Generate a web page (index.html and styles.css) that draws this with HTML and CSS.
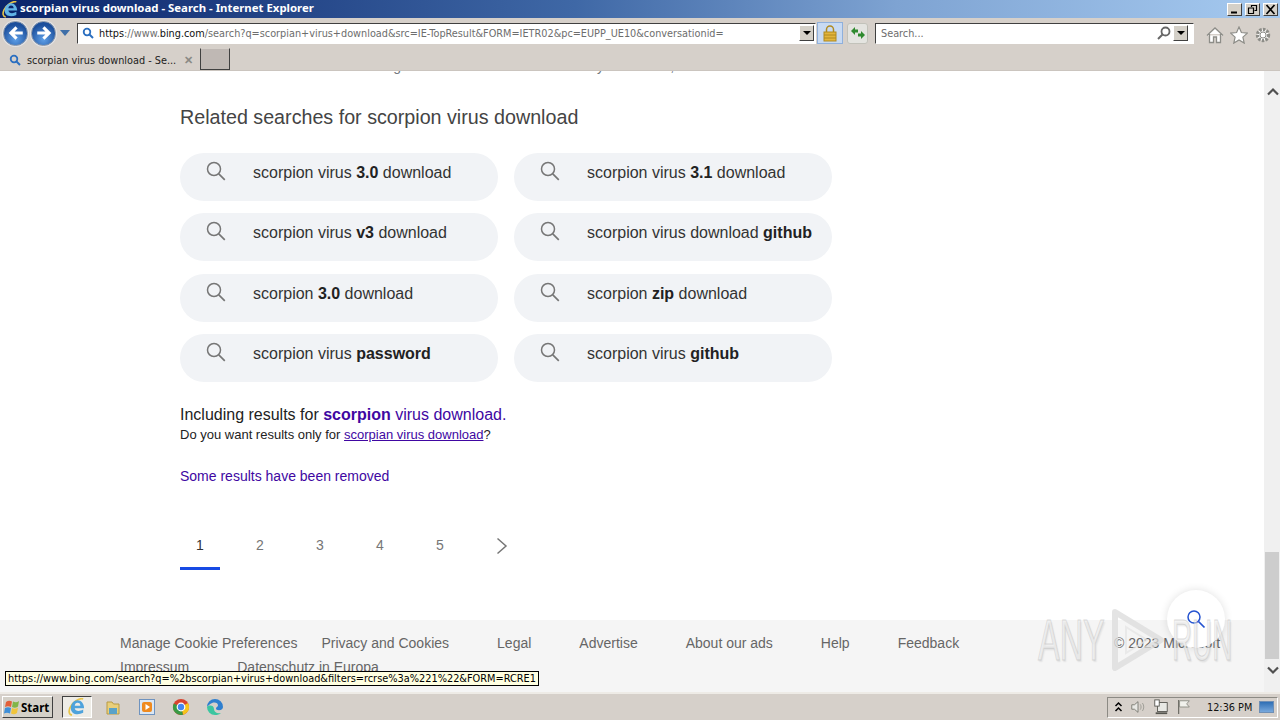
FILE: index.html
```html
<!DOCTYPE html>
<html lang="en">
<head>
<meta charset="utf-8">
<title>scorpian virus download - Search - Internet Explorer</title>
<link rel="stylesheet" href="styles.css">
</head>
<body>
<div class="window">
  <header class="titlebar">
    <svg class="ie-logo" viewBox="1 1 16 16"><path d="M14.500 1.800C11 .8 5 4.500 2.800 9.500c-1.500 3.500-.8 6.500 1.800 6.500" fill="none" stroke="#e8c548" stroke-width="1.500"/><path d="M3.500 10c0-4 2.800-7 6-7s5.800 3 5.800 7H7c.3 2.500 3.800 3.500 7.500 1.200v3C9 16.800 3.500 15 3.500 10zM7 7.800h5c-.2-2-1-2.600-2.500-2.600S7.300 6 7 7.800z" fill="#62b4e6"/></svg>
    <span class="title-text">scorpian virus download - Search - Internet Explorer</span>
    <div class="win-buttons">
      <span class="win-btn"><svg viewBox="0 0 13 11"><path d="M3 8.500h6" stroke="#000" stroke-width="2"/></svg></span>
      <span class="win-btn"><svg viewBox="0 0 13 11"><path d="M5.500 3V1.500h5v5H8.500M2.500 4h5v5.500h-5z" fill="none" stroke="#000" stroke-width="1.200"/></svg></span>
      <span class="win-btn"><svg viewBox="0 0 13 11"><path d="m2.500 1 8 9m0-9-8 9" stroke="#000" stroke-width="1.700"/></svg></span>
    </div>
  </header>
  <nav class="navbar">
    <div class="nav-arrows">
      <span class="round-btn"><svg viewBox="0 0 16 16"><path d="M14 8H4M8.500 3 3.500 8l5 5" fill="none" stroke="#fff" stroke-width="2.800"/></svg></span>
      <span class="round-btn"><svg viewBox="0 0 16 16"><path d="M2 8h10M7.500 3l5 5-5 5" fill="none" stroke="#fff" stroke-width="2.800"/></svg></span>
      <i class="blue-caret"></i>
    </div>
    <div class="address">
      <svg class="addr-icon" viewBox="0 0 12 12"><circle cx="5" cy="5" r="3.300" fill="none" stroke="#2b6fc0" stroke-width="1.800"/><path d="M7.500 7.500 11 11" stroke="#2b6fc0" stroke-width="2"/></svg>
      <span class="addr-text"><span class="addr-dark">https</span>://www.<span class="addr-dark">bing.com</span>/search?q=scorpian+virus+download&amp;src=IE-TopResult&amp;FORM=IETR02&amp;pc=EUPP_UE10&amp;conversationid=</span>
      <span class="drop-btn"><i></i></span>
    </div>
    <span class="lock-btn"><svg viewBox="0 0 14 17"><path d="M3.500 7V4.500a3.500 3.500 0 0 1 7 0V7" fill="none" stroke="#b08a20" stroke-width="1.500"/><rect x="1" y="7" width="12" height="9" fill="#e3b53c" stroke="#b08a20"/><path d="M1 10h12M1 13h12" stroke="#b08a20"/></svg></span>
    <span class="refresh-btn"><svg viewBox="0 0 16 14"><path d="M1 5 5 1v2.500h3v3H5V9zM15 9l-4 4v-2.500H8v-3h3V5z" fill="#2f8a2f"/></svg></span>
    <div class="searchbox">
      <span class="search-ph">Search...</span>
      <svg class="search-glass" viewBox="0 0 14 14"><circle cx="8.500" cy="5.500" r="4" fill="none" stroke="#666" stroke-width="1.800"/><path d="M5.500 8.500 1 13" stroke="#666" stroke-width="2"/></svg>
      <span class="drop-btn"><i></i></span>
    </div>
    <div class="tools">
      <svg viewBox="0 0 18 18"><path d="M1 9.500 9 2l8 7.500M3.500 8v8.500h4V11h3v5.500h4V8" fill="#fff" stroke="#8d8d88" stroke-width="1.300"/></svg>
      <svg viewBox="0 0 18 18"><path d="m9 1 2.400 5.500 6 .6-4.500 4 1.300 6L9 14l-5.200 3.100 1.300-6-4.500-4 6-.6z" fill="#fff" stroke="#8d8d88" stroke-width="1.200"/></svg>
      <svg viewBox="0 0 18 18"><circle cx="9" cy="9" r="5.500" fill="#fff" stroke="#8d8d88" stroke-width="3.400" stroke-dasharray="2.400 1.200"/><circle cx="9" cy="9" r="3" fill="#fff" stroke="#8d8d88" stroke-width="1"/></svg>
    </div>
  </nav>
  <div class="tabbar">
    <div class="tab">
      <svg class="tab-icon" viewBox="0 0 12 12"><circle cx="5" cy="5" r="3.300" fill="none" stroke="#2b6fc0" stroke-width="1.800"/><path d="M7.500 7.500 11 11" stroke="#2b6fc0" stroke-width="2"/></svg>
      <span class="tab-text">scorpian virus download - Se...</span>
      <span class="tab-close">✕</span>
    </div>
    <span class="new-tab"></span>
  </div>
  <div class="viewport">
    <main class="page">
      <div class="results">
        <p class="clipped">Details are now all listed here along with other files in that archive by the author,</p>
        <h2 class="related-title">Related searches for scorpion virus download</h2>
        <div class="related-grid">
          <a class="pill"><svg class="pill-icon" viewBox="0 0 20 20"><circle cx="8" cy="8" r="6.500" fill="none" stroke="#767676" stroke-width="1.500"/><path d="m12.800 12.800 6 6" stroke="#767676" stroke-width="1.700"/></svg><span>scorpion virus <b>3.0</b> download</span></a>
          <a class="pill"><svg class="pill-icon" viewBox="0 0 20 20"><circle cx="8" cy="8" r="6.500" fill="none" stroke="#767676" stroke-width="1.500"/><path d="m12.800 12.800 6 6" stroke="#767676" stroke-width="1.700"/></svg><span>scorpion virus <b>3.1</b> download</span></a>
          <a class="pill"><svg class="pill-icon" viewBox="0 0 20 20"><circle cx="8" cy="8" r="6.500" fill="none" stroke="#767676" stroke-width="1.500"/><path d="m12.800 12.800 6 6" stroke="#767676" stroke-width="1.700"/></svg><span>scorpion virus <b>v3</b> download</span></a>
          <a class="pill"><svg class="pill-icon" viewBox="0 0 20 20"><circle cx="8" cy="8" r="6.500" fill="none" stroke="#767676" stroke-width="1.500"/><path d="m12.800 12.800 6 6" stroke="#767676" stroke-width="1.700"/></svg><span>scorpion virus download <b>github</b></span></a>
          <a class="pill"><svg class="pill-icon" viewBox="0 0 20 20"><circle cx="8" cy="8" r="6.500" fill="none" stroke="#767676" stroke-width="1.500"/><path d="m12.800 12.800 6 6" stroke="#767676" stroke-width="1.700"/></svg><span>scorpion <b>3.0</b> download</span></a>
          <a class="pill"><svg class="pill-icon" viewBox="0 0 20 20"><circle cx="8" cy="8" r="6.500" fill="none" stroke="#767676" stroke-width="1.500"/><path d="m12.800 12.800 6 6" stroke="#767676" stroke-width="1.700"/></svg><span>scorpion <b>zip</b> download</span></a>
          <a class="pill"><svg class="pill-icon" viewBox="0 0 20 20"><circle cx="8" cy="8" r="6.500" fill="none" stroke="#767676" stroke-width="1.500"/><path d="m12.800 12.800 6 6" stroke="#767676" stroke-width="1.700"/></svg><span>scorpion virus <b>password</b></span></a>
          <a class="pill"><svg class="pill-icon" viewBox="0 0 20 20"><circle cx="8" cy="8" r="6.500" fill="none" stroke="#767676" stroke-width="1.500"/><path d="m12.800 12.800 6 6" stroke="#767676" stroke-width="1.700"/></svg><span>scorpion virus <b>github</b></span></a>
        </div>
        <p class="including">Including results for <a class="visited"><b>scorpion</b> virus download.</a></p>
        <p class="only-for">Do you want results only for <a class="visited underlined">scorpian virus download</a>?</p>
        <p class="removed"><a class="visited">Some results have been removed</a></p>
        <div class="pager">
          <span class="page-num current">1</span>
          <span class="page-num">2</span>
          <span class="page-num">3</span>
          <span class="page-num">4</span>
          <span class="page-num">5</span>
          <span class="page-num"><svg class="pager-next" viewBox="0 0 12 18"><path d="m1.500 1.500 8.500 7.500-8.500 7.500" fill="none" stroke="#767676" stroke-width="1.500"/></svg></span>
        </div>
      </div>
      <footer class="page-footer">
        <div class="foot-links">
          <a>Manage Cookie Preferences</a>
          <a>Privacy and Cookies</a>
          <a>Legal</a>
          <a>Advertise</a>
          <a>About our ads</a>
          <a>Help</a>
          <a>Feedback</a>
          <a>Impressum</a>
          <a>Datenschutz in Europa</a>
        </div>
        <span class="copyright">© 2023 Microsoft</span>
      </footer>
    </main>
    <aside class="scrollbar">
      <svg class="scroll-arrow" viewBox="0 0 14 10"><path d="m2 7.500 5-5 5 5" fill="none" stroke="#505050" stroke-width="2.200"/></svg>
      <div class="scroll-track"><div class="scroll-thumb"></div></div>
      <svg class="scroll-arrow" viewBox="0 0 14 10"><path d="m2 2.500 5 5 5-5" fill="none" stroke="#505050" stroke-width="2.200"/></svg>
    </aside>
    <span class="fab"><svg viewBox="0 0 20 20"><circle cx="8" cy="8" r="6" fill="none" stroke="#2553d0" stroke-width="1.500"/><path d="m12.500 12.500 6 6" stroke="#2553d0" stroke-width="1.700"/></svg></span>
    <div class="watermark"><span class="wm-any">ANY</span><svg viewBox="0 0 56 66"><path d="M5 5 51 33 5 61z" fill="none" stroke="#dcdcdc" stroke-width="6" stroke-linejoin="round"/><path d="M16 20 37 33 16 46z" fill="none" stroke="#e6e6e6" stroke-width="2"/></svg><span class="wm-run">RUN</span></div>
    <div class="status-tip">https://www.bing.com/search?q=%2bscorpian+virus+download&amp;filters=rcrse%3a%221%22&amp;FORM=RCRE1</div>
  </div>
  <footer class="taskbar">
    <button class="start"><svg viewBox="0 0 16 16"><path d="M2 3c2-1.500 4-1.500 6-.5L7 8C5 7 3 7 1 8z" fill="#e2603a"/><path d="M9 2.500c2 1 4 1 6-.5l-1 5.500c-2 1.500-4 1.500-6 .5z" fill="#82b548"/><path d="M1 9c2-1 4-1 6 0l-1 5.500c-2-1-4-1-6 0z" fill="#3f8fd8"/><path d="M8 9c2 1 4 1 6-.5L13 14c-2 1.500-4 1.500-6 .5z" fill="#f0c43c"/></svg>Start</button>
    <div class="quick">
      <span class="quick-item active"><svg viewBox="1 1 16 16"><path d="M14.500 1.800C11 .8 5 4.500 2.800 9.500c-1.500 3.500-.8 6.500 1.800 6.500" fill="none" stroke="#e8c548" stroke-width="1.500"/><path d="M3.500 10c0-4 2.800-7 6-7s5.800 3 5.800 7H7c.3 2.500 3.800 3.500 7.500 1.200v3C9 16.800 3.500 15 3.500 10zM7 7.800h5c-.2-2-1-2.600-2.500-2.600S7.300 6 7 7.800z" fill="#4fa3dc"/></svg></span>
      <span class="quick-item"><svg viewBox="0 0 18 18"><path d="M3 4h5l1.500 2H15v10H3z" fill="#e9cf7a" stroke="#b89b45"/><path d="M5 10h8v6H5z" fill="#5aa2c8"/></svg></span>
      <span class="quick-item"><svg viewBox="0 0 18 18"><rect x="1.500" y="1.500" width="15" height="15" fill="#dbe7f4" stroke="#6f93bf"/><rect x="4" y="4" width="10" height="10" rx="2" fill="#ef8a1f"/><path d="M7.500 6 12 9l-4.500 3z" fill="#fff"/></svg></span>
      <span class="quick-item"><svg viewBox="0 0 18 18"><circle cx="9" cy="9" r="8" fill="#d8432f"/><path d="M9 9 16 5a8 8 0 0 1-5 11.800z" fill="#f6c51b"/><path d="M9 9 11 16.800A8 8 0 0 1 1.800 5.500z" fill="#3a9a45"/><circle cx="9" cy="9" r="3.800" fill="#4486f0" stroke="#fff" stroke-width="1.200"/></svg></span>
      <span class="quick-item"><svg viewBox="0 0 18 18"><path d="M1 9a8 8 0 0 1 16 0c0 2-1.500 3.200-4 3.200-2 0-3-.7-3-1.700 0-1.800 2-1.500 2-3C12 5.500 10.500 4.500 8.500 4.500 5 4.500 3 7 1 9z" fill="#2f7fcf"/><path d="M1 9c2-2.500 7-2 7 2 0 3 3 5 7 4-1.500 1.500-3.500 2-6 2a8 8 0 0 1-8-8z" fill="#3cc6a0"/></svg></span>
    </div>
    <div class="tray">
      <svg class="tray-caret" viewBox="0 0 9 12"><path d="m1.500 5 3-3 3 3M1.500 10l3-3 3 3" fill="none" stroke="#000" stroke-width="1.500"/></svg>
      <svg viewBox="0 0 18 18"><path d="M2 6.500h3L9 3v12L5 11.500H2z" fill="#e8e8e4" stroke="#77776f"/><path d="M11.500 6c1.300 2 1.300 4 0 6M14 4.500c2 3 2 6 0 9" fill="none" stroke="#9a9a92"/></svg>
      <svg viewBox="0 0 18 18"><rect x="5" y="4" width="11" height="10" fill="#e8e8e4" stroke="#55554f"/><rect x="2" y="1" width="5" height="7" fill="#fff" stroke="#55554f"/><path d="M3 16h13" stroke="#55554f" stroke-width="2"/></svg>
      <svg viewBox="0 0 18 18"><path d="M3 1v16" stroke="#66665f" stroke-width="1.300"/><path d="M4 2h11l-3 3.500L15 9H4z" fill="#f1f1ec" stroke="#8a8a82"/></svg>
      <span class="clock">12:36 PM</span>
      <span class="show-desktop"></span>
    </div>
  </footer>
</div>
</body>
</html>
```
FILE: styles.css
```css
* { box-sizing: border-box; }
html, body { margin: 0; padding: 0; }
body { width: 1280px; height: 720px; overflow: hidden; font-family: "Liberation Sans", Arial, sans-serif; background: #fff; }
p, h2 { margin: 0; }
svg { display: block; }

.window { display: flex; flex-direction: column; width: 1280px; height: 720px; }

.titlebar { flex: 0 0 18px; display: flex; align-items: center; padding-left: 2px; background: linear-gradient(90deg, #0a246a 0%, #3f68a6 45%, #7ea3d2 70%, #a6caf0 100%); overflow: hidden; }
.ie-logo { width: 17px; height: 17px; flex: none; }
.title-text { margin-left: 1px; padding-bottom: 2px; color: #fff; font: bold 11.400px/14px "Noto Sans", sans-serif; white-space: nowrap; }
.win-buttons { margin-left: auto; display: flex; gap: 3px; padding: 1px 2px 0 0; }
.win-btn { width: 15px; height: 13px; background: #d4d0c8; border: 1px solid; border-color: #fff #404040 #404040 #fff; display: flex; align-items: center; justify-content: center; }
.win-btn svg { width: 13px; height: 11px; }

.navbar { flex: 0 0 30px; display: flex; align-items: center; background: #d6d0ca; }
.nav-arrows { display: flex; align-items: center; gap: 3px; padding-left: 3px; width: 77px; }
.round-btn { width: 25px; height: 25px; border-radius: 50%; background: radial-gradient(circle at 50% 75%, #5fa0e8, #1c4f9c 70%); border: 1px solid #8496ae; box-shadow: 0 0 0 1px #e3e3e6; display: flex; align-items: center; justify-content: center; }
.round-btn svg { width: 18px; height: 18px; }
.blue-caret { margin-left: 1px; border: 5px solid transparent; border-top: 6px solid #3f6fa8; border-bottom: 0; }
.address { width: 739px; height: 21px; display: flex; align-items: center; background: #fff; border: 1px solid; border-color: #404040 #fff #fff #404040; }
.addr-icon { width: 12px; height: 12px; margin-left: 4px; flex: none; }
.addr-text { margin-left: 5px; font: 10.800px "DejaVu Sans Condensed", "DejaVu Sans", sans-serif; color: #6d6d6d; white-space: nowrap; flex: 1; overflow: hidden; }
.addr-dark { color: #111; }
.drop-btn { width: 15px; height: 16px; background: #d4d0c8; border: 1px solid; border-color: #fff #404040 #404040 #fff; display: flex; align-items: center; justify-content: center; flex: none; margin-right: 1px; }
.drop-btn i { border: 4px solid transparent; border-top: 4px solid #000; border-bottom: 0; }
.lock-btn { margin-left: 1px; width: 26px; height: 22px; background: #c8daf2; border: 1px solid #8fb0dc; display: flex; align-items: center; justify-content: center; }
.lock-btn svg { width: 14px; height: 17px; }
.refresh-btn { margin-left: 4px; width: 21px; height: 21px; background: #e4e4e0; border: 1px solid #c2c2ba; border-radius: 3px; display: flex; align-items: center; justify-content: center; }
.refresh-btn svg { width: 16px; height: 14px; }
.searchbox { margin-left: 7px; width: 319px; height: 21px; display: flex; align-items: center; background: #fff; border: 1px solid; border-color: #404040 #fff #fff #404040; padding-right: 4px; }
.search-ph { margin-left: 5px; flex: 1; font: 10.800px "DejaVu Sans Condensed", "DejaVu Sans", sans-serif; color: #6d6d6d; }
.search-glass { width: 14px; height: 14px; margin-right: 2px; }
.tools { margin: 4px 0 0 12px; display: flex; gap: 6px; }
.tools svg { width: 18px; height: 18px; }

.tabbar { flex: 0 0 23px; display: flex; align-items: flex-start; background: #d6d0ca; border-bottom: 1px solid #cbc5bf; }
.tab { width: 200px; height: 22px; padding: 2px 0 0 9px; display: flex; align-items: center; }
.tab-icon { width: 12px; height: 12px; flex: none; }
.tab-text { margin-left: 6px; font: 10.800px "DejaVu Sans Condensed", "DejaVu Sans", sans-serif; color: #222; white-space: nowrap; flex: 1; }
.tab-close { color: #8a8a85; font-size: 11px; font-weight: bold; margin-right: 7px; }
.new-tab { width: 30px; height: 22px; background: #bfb8b4; border: 1px solid; border-color: #d6d0ca #404040 #404040 #404040; }

.viewport { flex: 1; position: relative; display: flex; overflow: hidden; min-height: 0; background: #fff; }
.page { flex: 1; display: flex; flex-direction: column; min-width: 0; overflow: hidden; }
.results { flex: 1; padding-left: 180px; }
.clipped { height: 14px; margin-top: -14px; font-size: 14px; line-height: 18px; color: #71777d; white-space: nowrap; }
.related-title { margin-top: 31px; font-size: 19.700px; font-weight: normal; line-height: 30px; color: #444; }
.related-grid { margin-top: 21px; width: 652px; display: grid; grid-template-columns: 318px 318px; column-gap: 16px; row-gap: 12.250px; }
.pill { height: 48px; border-radius: 24px; background: #f1f3f6; display: flex; align-items: flex-start; color: #333; font-size: 16px; line-height: 39px; }
.pill-icon { width: 20px; height: 20px; margin: 8px 0 0 26px; flex: none; }
.pill span { margin-left: 27px; white-space: nowrap; }
.pill b { color: #222; }
.including { margin-top: 23px; font-size: 16px; line-height: 20px; color: #222; }
.only-for { margin-top: 1px; font-size: 13px; line-height: 18px; color: #222; }
.visited { color: #4007a2; }
.underlined { text-decoration: underline; }
.removed { margin-top: 22px; font-size: 14px; line-height: 20px; }
.pager { margin-top: 37px; display: flex; }
.page-num { width: 40px; margin-right: 20px; height: 47px; text-align: center; font-size: 14px; line-height: 44px; color: #767676; display: flex; justify-content: center; }
.page-num.current { color: #333; border-bottom: 3px solid #174ae4; }
.pager-next { width: 12px; height: 18px; margin-top: 14px; margin-left: 4px; }

.page-footer { flex: 0 0 72px; background: #f5f5f5; position: relative; padding: 11px 0 0 120px; overflow: hidden; }
.foot-links { width: 880px; display: flex; flex-wrap: wrap; column-gap: 24px; font-size: 14px; line-height: 24px; color: #666; white-space: nowrap; }
.foot-links a:nth-child(n+3) { margin-left: 24px; }
.foot-links a:nth-child(8) { margin-left: 0; }
.copyright { position: absolute; left: 1114px; top: 11px; font-size: 14px; line-height: 24px; color: #666; white-space: nowrap; }

.scrollbar { flex: 0 0 16px; background: #f0f0f0; display: flex; flex-direction: column; padding-left: 1px; }
.scroll-arrow { width: 14px; height: 10px; margin: 16px 0 0 1px; flex: none; }
.scroll-arrow:last-child { margin: 5px 0 17px 1px; }
.scroll-track { flex: 1; padding-top: 455px; }
.scroll-thumb { height: 107px; width: 14px; background: #cdcdcd; }

.fab { position: absolute; left: 1167px; top: 519px; width: 58px; height: 58px; border-radius: 50%; background: #fff; box-shadow: 0 0 8px rgba(0,0,0,.12); display: flex; align-items: center; justify-content: center; }
.fab svg { width: 20px; height: 20px; }
.watermark { position: absolute; left: 1038px; top: 536px; height: 66px; display: flex; align-items: center; font: 58px/66px "Liberation Sans", sans-serif; color: rgba(238,238,238,.55); -webkit-text-stroke: 1px rgba(185,185,185,.5); text-shadow: 2px 2px 2px rgba(0,0,0,.08); pointer-events: none; }
.watermark svg { width: 56px; height: 66px; margin-left: 5px; opacity: .75; flex: none; }
.wm-any, .wm-run { display: block; transform-origin: left center; white-space: nowrap; }
.wm-any { width: 67px; transform: scaleX(.56); }
.wm-run { width: 60px; margin-left: 6px; transform: scaleX(.48); }

.status-tip { position: absolute; left: 5px; top: 600px; height: 15px; padding: 0 2px; background: #ffffe1; border: 1px solid #000; font: 10.870px/13px "DejaVu Sans Condensed", "DejaVu Sans", sans-serif; color: #000; white-space: nowrap; }

.taskbar { flex: 0 0 28px; display: flex; align-items: center; background: #d6d0ca; border-top: 2px solid #eeebe6; }
.start { width: 51px; height: 22px; margin-left: 2px; padding: 0 0 0 1px; display: flex; align-items: center; gap: 1px; background: #d4d0c8; border: 1px solid; border-color: #fff #404040 #404040 #fff; font: bold 11.500px "Noto Sans", sans-serif; color: #000; }
.start svg { width: 16px; height: 16px; flex: none; }
.quick { margin-left: 9px; display: flex; align-items: center; }
.quick-item { width: 34px; height: 22px; display: flex; align-items: center; justify-content: center; }
.quick-item svg { width: 18px; height: 18px; }
.quick-item.active { width: 30px; margin-right: 4px; background: #eeece6; border: 1px solid; border-color: #404040 #fff #fff #404040; }
.tray { margin-left: auto; margin-right: 2px; width: 171px; height: 21px; display: flex; align-items: center; gap: 7px; padding-left: 6px; border: 1px solid; border-color: #8c8a84 #fff #fff #8c8a84; }
.tray svg { width: 16px; height: 16px; flex: none; }
.tray .tray-caret { width: 9px; height: 12px; }
.clock { margin-left: 8px; font: 10.800px "DejaVu Sans Condensed", "DejaVu Sans", sans-serif; color: #111; white-space: nowrap; }
.show-desktop { width: 15px; height: 12px; flex: none; background: linear-gradient(#2f6fb5, #78a8dc); border: 1px solid #6f8fb5; }
```
